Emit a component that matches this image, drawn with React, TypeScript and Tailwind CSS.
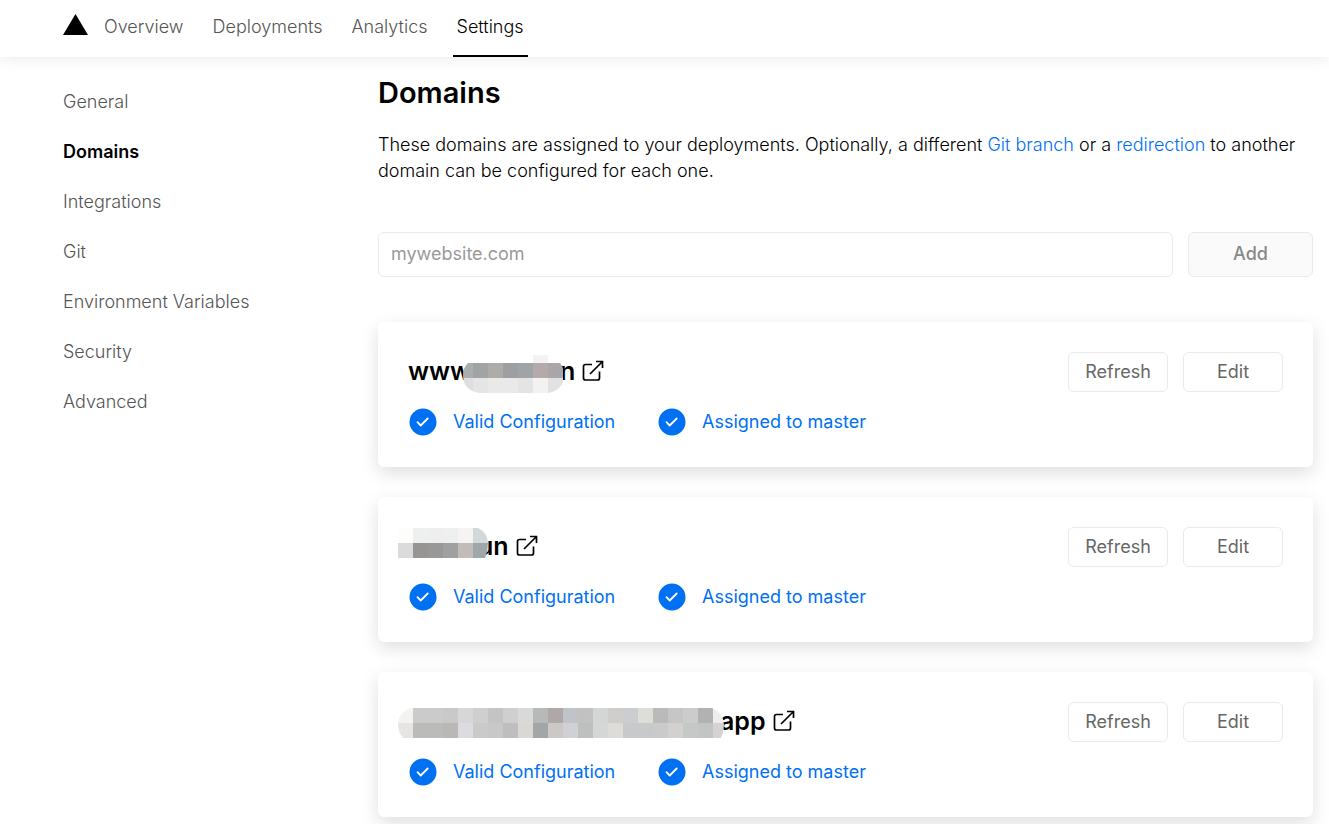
import React from "react";

const LINKS = ["Overview", "Deployments", "Analytics", "Settings"];
const SECTIONS = ["General", "Domains", "Integrations", "Git", "Environment Variables", "Security", "Advanced"];

type Mask = { id: string; width: number; height: number; offset: number; top: number; outline: string; rows: string[][] };
type Domain = { prefix: string; suffix: string; mask: Mask; suffixClass: string; maskClass: string };

const DOMAINS: Domain[] = [
  {
    prefix: "www",
    suffix: "n",
    suffixClass: "-ml-1",
    maskClass: "-ml-2 mt-1.5",
    mask: {
      id: "mask-www",
      width: 101,
      height: 38,
      offset: -5,
      top: 8,
      outline: "M5 8H70V0H85V8H97Q101 13 101 20Q101 35 85 38H16Q0 35 0 20Q0 13 5 8Z",
      rows: [
        ["#a9aeb1", "#a1a4a2", "#aeaca8", "#9d9fa0", "#a0a4a6", "#b6a9aa", "#aaa5a9"],
        ["#dedede", "#e5e5e5", "#e9e9e9", "#e9e9e9", "#e4e4e4", "#f2f2f2", "#e1e1e1"],
      ],
    },
  },
  {
    prefix: "",
    suffix: "un",
    suffixClass: "-ml-2.5",
    maskClass: "-ml-2.5 -mt-1.5",
    mask: {
      id: "mask-root",
      width: 90,
      height: 30,
      offset: 0,
      top: 0,
      outline: "M0 0H80Q90 5 90 15Q90 23 87 30H0Z",
      rows: [
        ["#fdfdfc", "#eeefef", "#eeeeee", "#eeefef", "#f6f4f3", "#d3d8da"],
        ["#dbdbdb", "#969594", "#989898", "#a0a0a0", "#c2bbba", "#a0a7ab"],
      ],
    },
  },
  {
    prefix: "",
    suffix: "app",
    suffixClass: "-ml-1",
    maskClass: "-ml-2.5 mt-1",
    mask: {
      id: "mask-app",
      width: 326,
      height: 30,
      offset: 0,
      top: 0,
      outline: "M13 0H314Q326 5 326 17Q326 24 323 30H5Q0 24 0 16Q0 5 13 0Z",
      rows: [
        ["#f3f3f2", "#cbcbcb", "#cbcbcb", "#c9c9c9", "#d7d7da", "#cfcfcf", "#c4c4c4", "#cfcfcf", "#d9d9d9", "#b6b9b8", "#aea9a6", "#c0c4c8", "#c2c2c2", "#d4d6d6", "#d0cecd", "#cccdd0", "#deded9", "#bababa", "#c6c6c7", "#cccccc", "#b2b2b2", "#eeecec"],
        ["#e6e5e4", "#bbbbba", "#bbbbba", "#bab8b6", "#dcdce0", "#cacaca", "#c8c8c9", "#bebebe", "#dad8d5", "#a2a6a7", "#cdc8c8", "#d1d1d5", "#bec0bf", "#d5d7d7", "#dedcd8", "#c8c9ca", "#c8c9c9", "#cacaca", "#d2d1d0", "#c6c8c8", "#c3c5c4", "#d4d3d2"],
      ],
    },
  },
];

function Mosaic({ mask, className }: { mask: Mask; className: string }) {
  return (
    <svg
      aria-hidden="true"
      width={mask.width}
      height={mask.height}
      className={`relative z-10 shrink-0 ${className}`}
    >
      <defs>
        <clipPath id={mask.id}>
          <path d={mask.outline} />
        </clipPath>
      </defs>
      <g clipPath={`url(#${mask.id})`}>
        {mask.top > 0 && <rect x="70" y="0" width="15" height={mask.top} fill="#f3f3f3" />}
        {mask.rows.map((row, r) =>
          row.map((color, c) => (
            <rect key={`${r}-${c}`} x={mask.offset + c * 15} y={mask.top + r * 15} width="15" height="15" fill={color} />
          )),
        )}
      </g>
    </svg>
  );
}

function ExternalIcon() {
  return (
    <svg aria-hidden="true" width="24" height="24" viewBox="0 0 24 24" fill="none" stroke="currentColor" strokeWidth="1.7">
      <path d="M11 5.5H4.5a2 2 0 0 0-2 2V19a2 2 0 0 0 2 2h12a2 2 0 0 0 2-2v-6.5M15 2.5h6.5V9M9 15 21.5 2.5" />
    </svg>
  );
}

function Status({ children }: { children: React.ReactNode }) {
  return (
    <a href="#status" className="flex items-center gap-4">
      <svg aria-hidden="true" width="28" height="28" viewBox="0 0 28 28" fill="none">
        <circle cx="14" cy="14" r="13.5" fill="#0070f3" />
        <path d="m8.5 14.2 3.2 3.3 7-7" stroke="#fff" strokeWidth="1.8" strokeLinecap="round" strokeLinejoin="round" />
      </svg>
      {children}
    </a>
  );
}

function DomainCard({ domain }: { domain: Domain }) {
  return (
    <li className="flex items-start justify-between rounded-md bg-white p-[30px] shadow-[0_6px_18px_rgba(0,0,0,0.13)]">
      <div>
        <h2 className="text-[25px] font-semibold">
          <a href="#domain" className="flex h-[38px] items-center">
            {domain.prefix && <span>{domain.prefix}</span>}
            <Mosaic mask={domain.mask} className={domain.maskClass} />
            <span className={domain.suffixClass}>{domain.suffix}</span>
            <span className="ml-1.5">
              <ExternalIcon />
            </span>
          </a>
        </h2>
        <div className="mb-[1px] ml-px mt-[18px] grid grid-cols-[249px_auto] text-lg leading-7 text-[#0070f3]">
          <Status>Valid Configuration</Status>
          <Status>Assigned to master</Status>
        </div>
      </div>
      <div className="flex gap-[15px] text-lg text-[#666]">
        <button type="button" className="h-10 w-[100px] rounded-md border border-[#eaeaea]">Refresh</button>
        <button type="button" className="h-10 w-[100px] rounded-md border border-[#eaeaea]">Edit</button>
      </div>
    </li>
  );
}

export default function App() {
  return (
    <div className="min-h-screen bg-white font-['Inter',sans-serif] text-lg text-black">
      <header className="relative flex h-[57px] bg-white pl-[63px] shadow-[0_0_15px_rgba(0,0,0,0.1)]">
        <a href="#home" aria-label="Home" className="mt-3.5">
          <svg width="25" height="21" viewBox="0 0 25 21" aria-hidden="true">
            <path d="M12.5 0 25 21H0Z" />
          </svg>
        </a>
        <nav className="ml-3 flex gap-[21px] font-light">
          {LINKS.map((link) => (
            <a
              key={link}
              href={`#${link.toLowerCase()}`}
              className={`h-[57px] border-b-2 px-1 pt-3 leading-[30px] ${link === "Settings" ? "border-black text-black" : "border-transparent text-[#555]"}`}
            >
              {link}
            </a>
          ))}
        </nav>
      </header>
      <div className="flex pl-[63px] pr-4">
        <aside className="w-[315px] shrink-0 pt-5">
          <nav className="flex flex-col">
            {SECTIONS.map((section) => (
              <a
                key={section}
                href={`#${section.toLowerCase().replace(" ", "-")}`}
                className={`leading-[50px] ${section === "Domains" ? "font-semibold text-black" : "font-light text-[#555]"}`}
              >
                {section}
              </a>
            ))}
          </nav>
        </aside>
        <main className="min-w-0 grow pt-4">
          <h1 className="text-[29px] font-semibold leading-10">Domains</h1>
          <p className="mt-[19px] font-light leading-[26px]">
            These domains are assigned to your deployments. Optionally, a different{" "}
            <a href="#git-branch" className="text-[#0070f3]">Git branch</a> or a{" "}
            <a href="#redirection" className="text-[#0070f3]">redirection</a> to another domain can be configured for each one.
          </p>
          <form className="mt-12 flex gap-[15px]">
            <input
              aria-label="Domain name"
              placeholder="mywebsite.com"
              className="h-[45px] min-w-0 grow rounded-md border border-[#eaeaea] px-3 pb-0.5 placeholder:text-[#999]"
            />
            <button type="button" disabled className="h-[45px] w-[125px] rounded-md border border-[#eaeaea] bg-[#fafafa] pb-0.5 font-medium text-[#888]">
              Add
            </button>
          </form>
          <ul className="mt-[45px] flex flex-col gap-[30px]">
            {DOMAINS.map((domain) => (
              <DomainCard key={domain.mask.id} domain={domain} />
            ))}
          </ul>
        </main>
      </div>
    </div>
  );
}
